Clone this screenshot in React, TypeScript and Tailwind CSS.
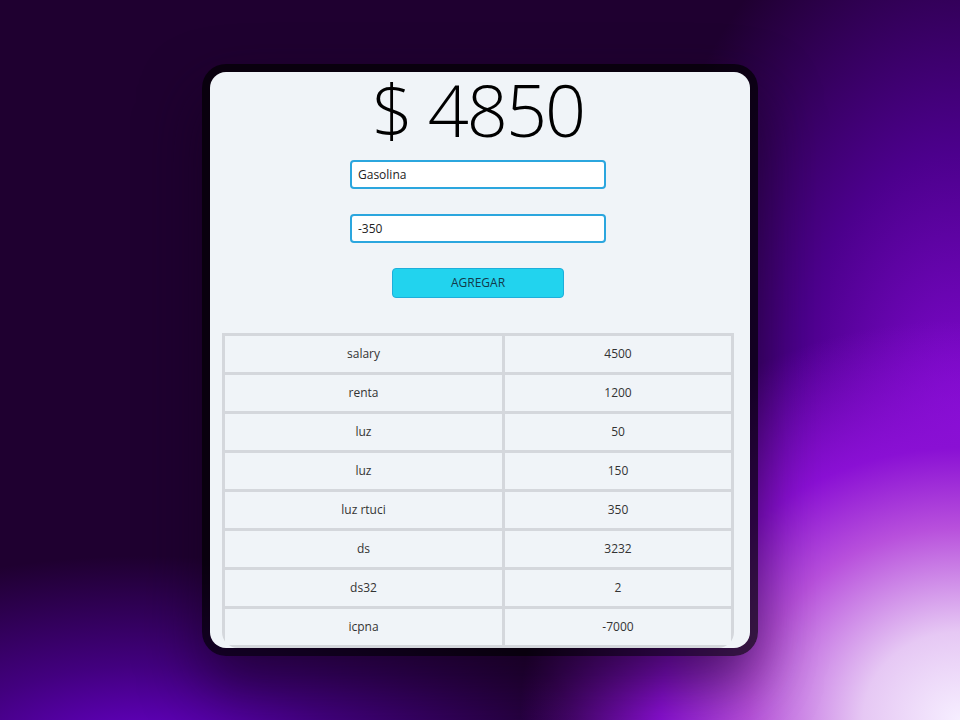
import React from "react";

const rows: [string, string][] = [
  ["salary", "4500"],
  ["renta", "1200"],
  ["luz", "50"],
  ["luz", "150"],
  ["luz rtuci", "350"],
  ["ds", "3232"],
  ["ds32", "2"],
  ["icpna", "-7000"],
];

export default function App() {
  return (
    <div
      className="w-[960px] h-[720px] overflow-hidden flex justify-center pt-16 bg-[#1f0030] bg-[radial-gradient(ellipse_440px_400px_at_100%_100%,#f6eeff_0%,#e6c8f4_22%,#b850dc_48%,#8a10d4_68%,rgba(110,0,200,0)_100%),radial-gradient(ellipse_340px_560px_at_100%_60%,rgba(135,10,215,1)_0%,rgba(100,0,190,0.65)_50%,rgba(60,0,100,0)_100%),radial-gradient(ellipse_440px_200px_at_15%_105%,#6a00d0_0%,rgba(90,0,180,0.6)_45%,rgba(40,0,80,0)_100%)]"
      style={{ fontFamily: '"Open Sans", "Noto Sans", sans-serif' }}
    >
      <div className="w-[556px] h-[592px] rounded-[24px] bg-black/70 p-2 shadow-[0_30px_60px_rgba(20,0,30,0.6)]">
        <div className="w-full h-full rounded-2xl bg-[#f0f4f8] flex flex-col items-center pr-[4px]">
          <h1 className="text-[72px] leading-[74px] font-[350] text-black tracking-[-2px]">
            $ 4850
          </h1>
          <input
            defaultValue="Gasolina"
            className="mt-[14px] w-[256px] h-[29px] bg-white border-2 border-[#2ba6de] rounded-[4px] px-[6px] text-[12px] text-[#222] outline-none"
          />
          <input
            defaultValue="-350"
            className="mt-[25px] w-[256px] h-[29px] bg-white border-2 border-[#2ba6de] rounded-[4px] px-[6px] text-[12px] text-[#222] outline-none"
          />
          <button className="mt-[25px] w-[172px] h-[30px] bg-[#22d3ee] border border-[#1eaedb] rounded-[4px] text-[12px] text-[#123a4a]">
            AGREGAR
          </button>
          <div className="mt-[35px] flex-1 min-h-0 overflow-hidden rounded-b-2xl">
            <table className="w-[512px] border-collapse border-[3px] border-[#d4d7dc] text-[12px] text-[#333]">
              <tbody>
                {rows.map(([a, b], i) => (
                  <tr key={i} className="h-[39px]">
                    <td className="w-[280px] border-[3px] border-[#d4d7dc] text-center">{a}</td>
                    <td className="border-[3px] border-[#d4d7dc] text-center">{b}</td>
                  </tr>
                ))}
              </tbody>
            </table>
          </div>
        </div>
      </div>
    </div>
  );
}
